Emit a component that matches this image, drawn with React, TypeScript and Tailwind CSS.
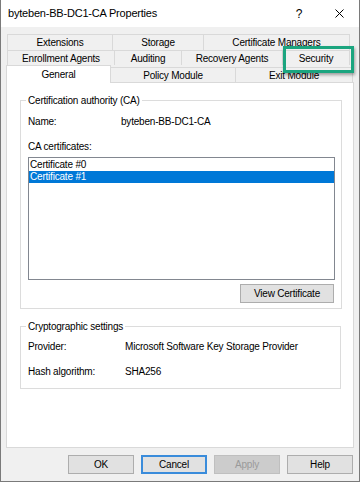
import React from "react";

const tabBase =
  "flex items-center justify-center border-t border-[#d9d9d9] whitespace-nowrap";

function Tab({ label, w, first }: { label: string; w: string; first?: boolean }) {
  return (
    <div className={`${tabBase} ${w} border-r ${first ? "border-l" : ""}`}>
      {label}
    </div>
  );
}

function Btn({
  label,
  kind = "normal",
}: {
  label: string;
  kind?: "normal" | "default" | "disabled";
}) {
  const cls =
    kind === "default"
      ? "border-2 border-[#3a8cdb] bg-[#e1e1e1] text-black"
      : kind === "disabled"
      ? "border border-[#bfbfbf] bg-[#cccccc] text-[#9a9a9a]"
      : "border border-[#adadad] bg-[#e1e1e1] text-black";
  return (
    <div className={`w-[66px] h-[19px] flex items-center justify-center ${cls}`}>
      {label}
    </div>
  );
}

export default function App() {
  return (
    <div className="relative w-[360px] h-[482px] bg-[#f0f0f0] border-x border-b border-[#7a7a7a] overflow-hidden flex flex-col font-['Liberation_Sans',Arial,sans-serif] text-[10px] tracking-[-0.2px] text-black">
      {/* title bar */}
      <div className="h-[27px] bg-white flex items-center pl-[7px] shrink-0">
        <span className="text-[11px]">byteben-BB-DC1-CA Properties</span>
        <div className="ml-auto flex items-center">
          <div className="w-[40px] flex justify-center text-[12px]">?</div>
          <div className="w-[40px] flex justify-center">
            <svg width="9" height="9" viewBox="0 0 9 9">
              <path d="M0.5 0.5 L8.5 8.5 M8.5 0.5 L0.5 8.5" stroke="#000" strokeWidth="1" />
            </svg>
          </div>
        </div>
      </div>

      <div className="pt-[7px] flex flex-col">
        {/* tab rows */}
        <div className="flex ml-[6px] h-[16px]">
          <Tab label="Extensions" w="w-[106px]" first />
          <Tab label="Storage" w="w-[91px]" />
          <Tab label="Certificate Managers" w="w-[146px]" />
        </div>
        <div className="flex ml-[6px] h-[15px]">
          <Tab label="Enrollment Agents" w="w-[108px]" first />
          <Tab label="Auditing" w="w-[67px]" />
          <Tab label="Recovery Agents" w="w-[101px]" />
          <Tab label="Security" w="w-[67px]" />
        </div>
        <div className="flex items-start ml-[5px] h-[17px]">
          <div className="relative z-10 w-[105px] h-[18px] bg-white border-t border-x border-[#d9d9d9] flex items-center justify-center">
            General
          </div>
          <div className={`${tabBase} w-[125px] h-[15px] mt-[2px] border-r`}>Policy Module</div>
          <div className={`${tabBase} w-[117px] h-[15px] mt-[2px] border-r`}>Exit Module</div>
        </div>

        {/* page */}
        <div className="ml-[5px] w-[348px] h-[366px] bg-white border border-[#d9d9d9] flex flex-col">
          <fieldset className="mt-[11px] ml-[13px] w-[321px] h-[215px] border border-[#dcdcdc] pl-[7px] pr-[6px]">
            <legend className="-ml-[2px] px-[2px] leading-[13px]">Certification authority (CA)</legend>
            <div className="mt-[7px] h-[14px] flex items-center">
              <span className="w-[93px]">Name:</span>
              <span>byteben-BB-DC1-CA</span>
            </div>
            <div className="mt-[12px] h-[14px] leading-[14px]">CA certificates:</div>
            <div className="mt-[3px] w-[307px] h-[123px] border border-[#828790] pt-[1px]">
              <div className="h-[12px] leading-[12px] pl-[1px]">Certificate #0</div>
              <div className="h-[12px] leading-[12px] pl-[1px] bg-[#0078d7] text-white">Certificate #1</div>
            </div>
            <div className="mt-[4px] flex justify-end pr-[1px]">
              <div className="w-[94px] h-[19px] flex items-center justify-center border border-[#adadad] bg-[#e1e1e1]">
                View Certificate
              </div>
            </div>
          </fieldset>

          <fieldset className="mt-[11px] ml-[13px] w-[321px] h-[69px] border border-[#dcdcdc] pl-[7px] pr-[6px]">
            <legend className="-ml-[2px] px-[2px] leading-[13px]">Cryptographic settings</legend>
            <div className="mt-[6px] h-[14px] flex items-center">
              <span className="w-[97px]">Provider:</span>
              <span>Microsoft Software Key Storage Provider</span>
            </div>
            <div className="mt-[11px] h-[14px] flex items-center">
              <span className="w-[97px]">Hash algorithm:</span>
              <span>SHA256</span>
            </div>
          </fieldset>
        </div>

        {/* buttons */}
        <div className="mt-[7px] flex justify-end gap-[7px] pr-[6px]">
          <Btn label="OK" />
          <Btn label="Cancel" kind="default" />
          <Btn label="Apply" kind="disabled" />
          <Btn label="Help" />
        </div>
      </div>

      {/* highlight annotation */}
      <div className="absolute left-[282px] top-[46px] w-[71px] h-[27px] border-[3px] border-[#1ba57f] shadow-[1px_2px_3px_rgba(0,0,0,0.35)] pointer-events-none" />
    </div>
  );
}
